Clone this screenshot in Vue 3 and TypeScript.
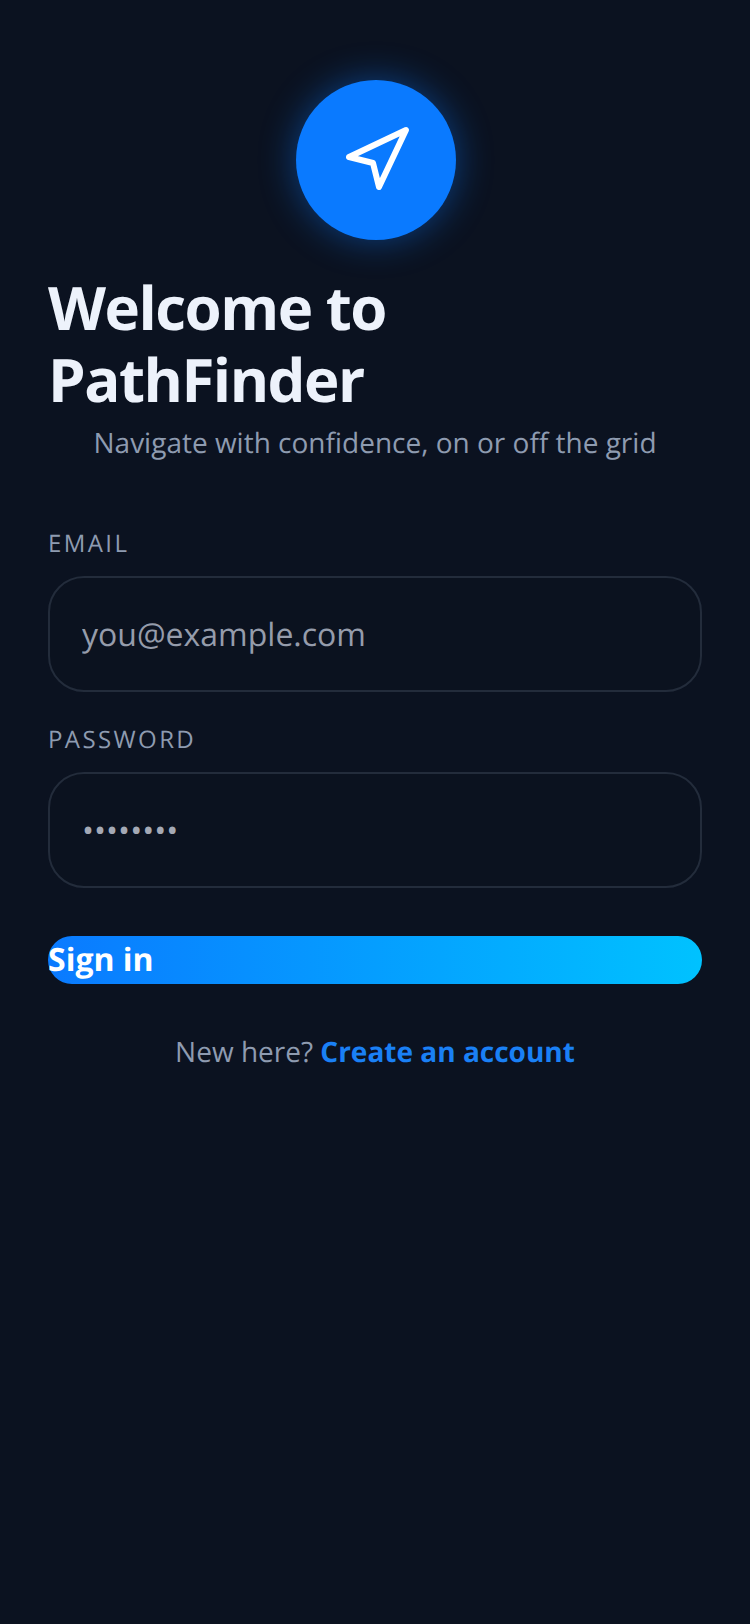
<script setup lang="ts">
const password: string = "password";
</script>

<template>
  <main class="page">
    <div class="logo">
      <svg width="72" height="72" viewBox="0 0 24 24" fill="none" stroke="#fff" stroke-width="2" stroke-linecap="round" stroke-linejoin="round">
        <path d="M3 11 22 2l-9 19-2-8z" />
      </svg>
    </div>
    <h1 class="title">Welcome to PathFinder</h1>
    <p class="subtitle">Navigate with confidence, on or off the grid</p>
    <form class="form" @submit.prevent>
      <label class="field">
        <span class="label">EMAIL</span>
        <input class="input" type="email" placeholder="you@example.com" />
      </label>
      <label class="field">
        <span class="label">PASSWORD</span>
        <input class="input" type="password" :value="password" />
      </label>
      <button class="submit" type="submit">Sign in</button>
    </form>
    <p class="footer">New here? <a class="link">Create an account</a></p>
  </main>
</template>

<style>
html, body { margin: 0; background: #0b1220; }
</style>

<style scoped>
.page {
  box-sizing: border-box;
  width: 750px;
  height: 1624px;
  padding: 80px 48px 0;
  background: #0b1220;
  font-family: "Open Sans", sans-serif;
  text-rendering: geometricPrecision;
  display: flex;
  flex-direction: column;
}
.logo {
  width: 160px;
  height: 160px;
  border-radius: 50%;
  background: #0a7aff;
  box-shadow: 0 0 36px rgba(10, 122, 255, 0.45);
  align-self: flex-start;
  margin-left: 248px;
  display: flex;
  align-items: center;
  justify-content: center;
  margin-bottom: 31px;
}
.title {
  margin: 0;
  width: 440px;
  font-size: 60px;
  line-height: 72px;
  font-weight: 700;
  letter-spacing: -1.5px;
  color: #edf2fb;
}
.subtitle {
  margin: 8px 0 0;
  font-size: 28px;
  line-height: 40px;
  color: #8e9bb0;
  text-align: center;
}
.form { display: flex; flex-direction: column; margin-top: 65px; }
.field { display: flex; flex-direction: column; margin-bottom: 32px; }
.label {
  font-size: 24px;
  line-height: 32px;
  letter-spacing: 2.4px;
  color: #8e9bb0;
  margin-bottom: 16px;
}
.input {
  box-sizing: border-box;
  width: 100%;
  height: 116px;
  padding: 0 32px;
  border: 2px solid #232c3b;
  border-radius: 36px;
  background: #0b121f;
  color: #a4a9b5;
  font-family: "Open Sans", sans-serif;
  text-rendering: geometricPrecision;
  font-size: 32px;
  outline: none;
}
.input::placeholder { color: #959cab; opacity: 1; }
.submit {
  height: 48px;
  padding: 0;
  border: 0;
  border-radius: 24px;
  background: linear-gradient(90deg, #0a7aff, #00c2ff);
  color: #fff;
  font-family: "Open Sans", sans-serif;
  text-rendering: geometricPrecision;
  font-size: 32px;
  font-weight: 700;
  line-height: 48px;
  text-align: left;
  margin-top: 16px;
}
.footer {
  margin: 48px 0 0;
  font-size: 28px;
  line-height: 40px;
  color: #8e9bb0;
  text-align: center;
}
.link { color: #1a80f5; font-weight: 700; }
</style>
